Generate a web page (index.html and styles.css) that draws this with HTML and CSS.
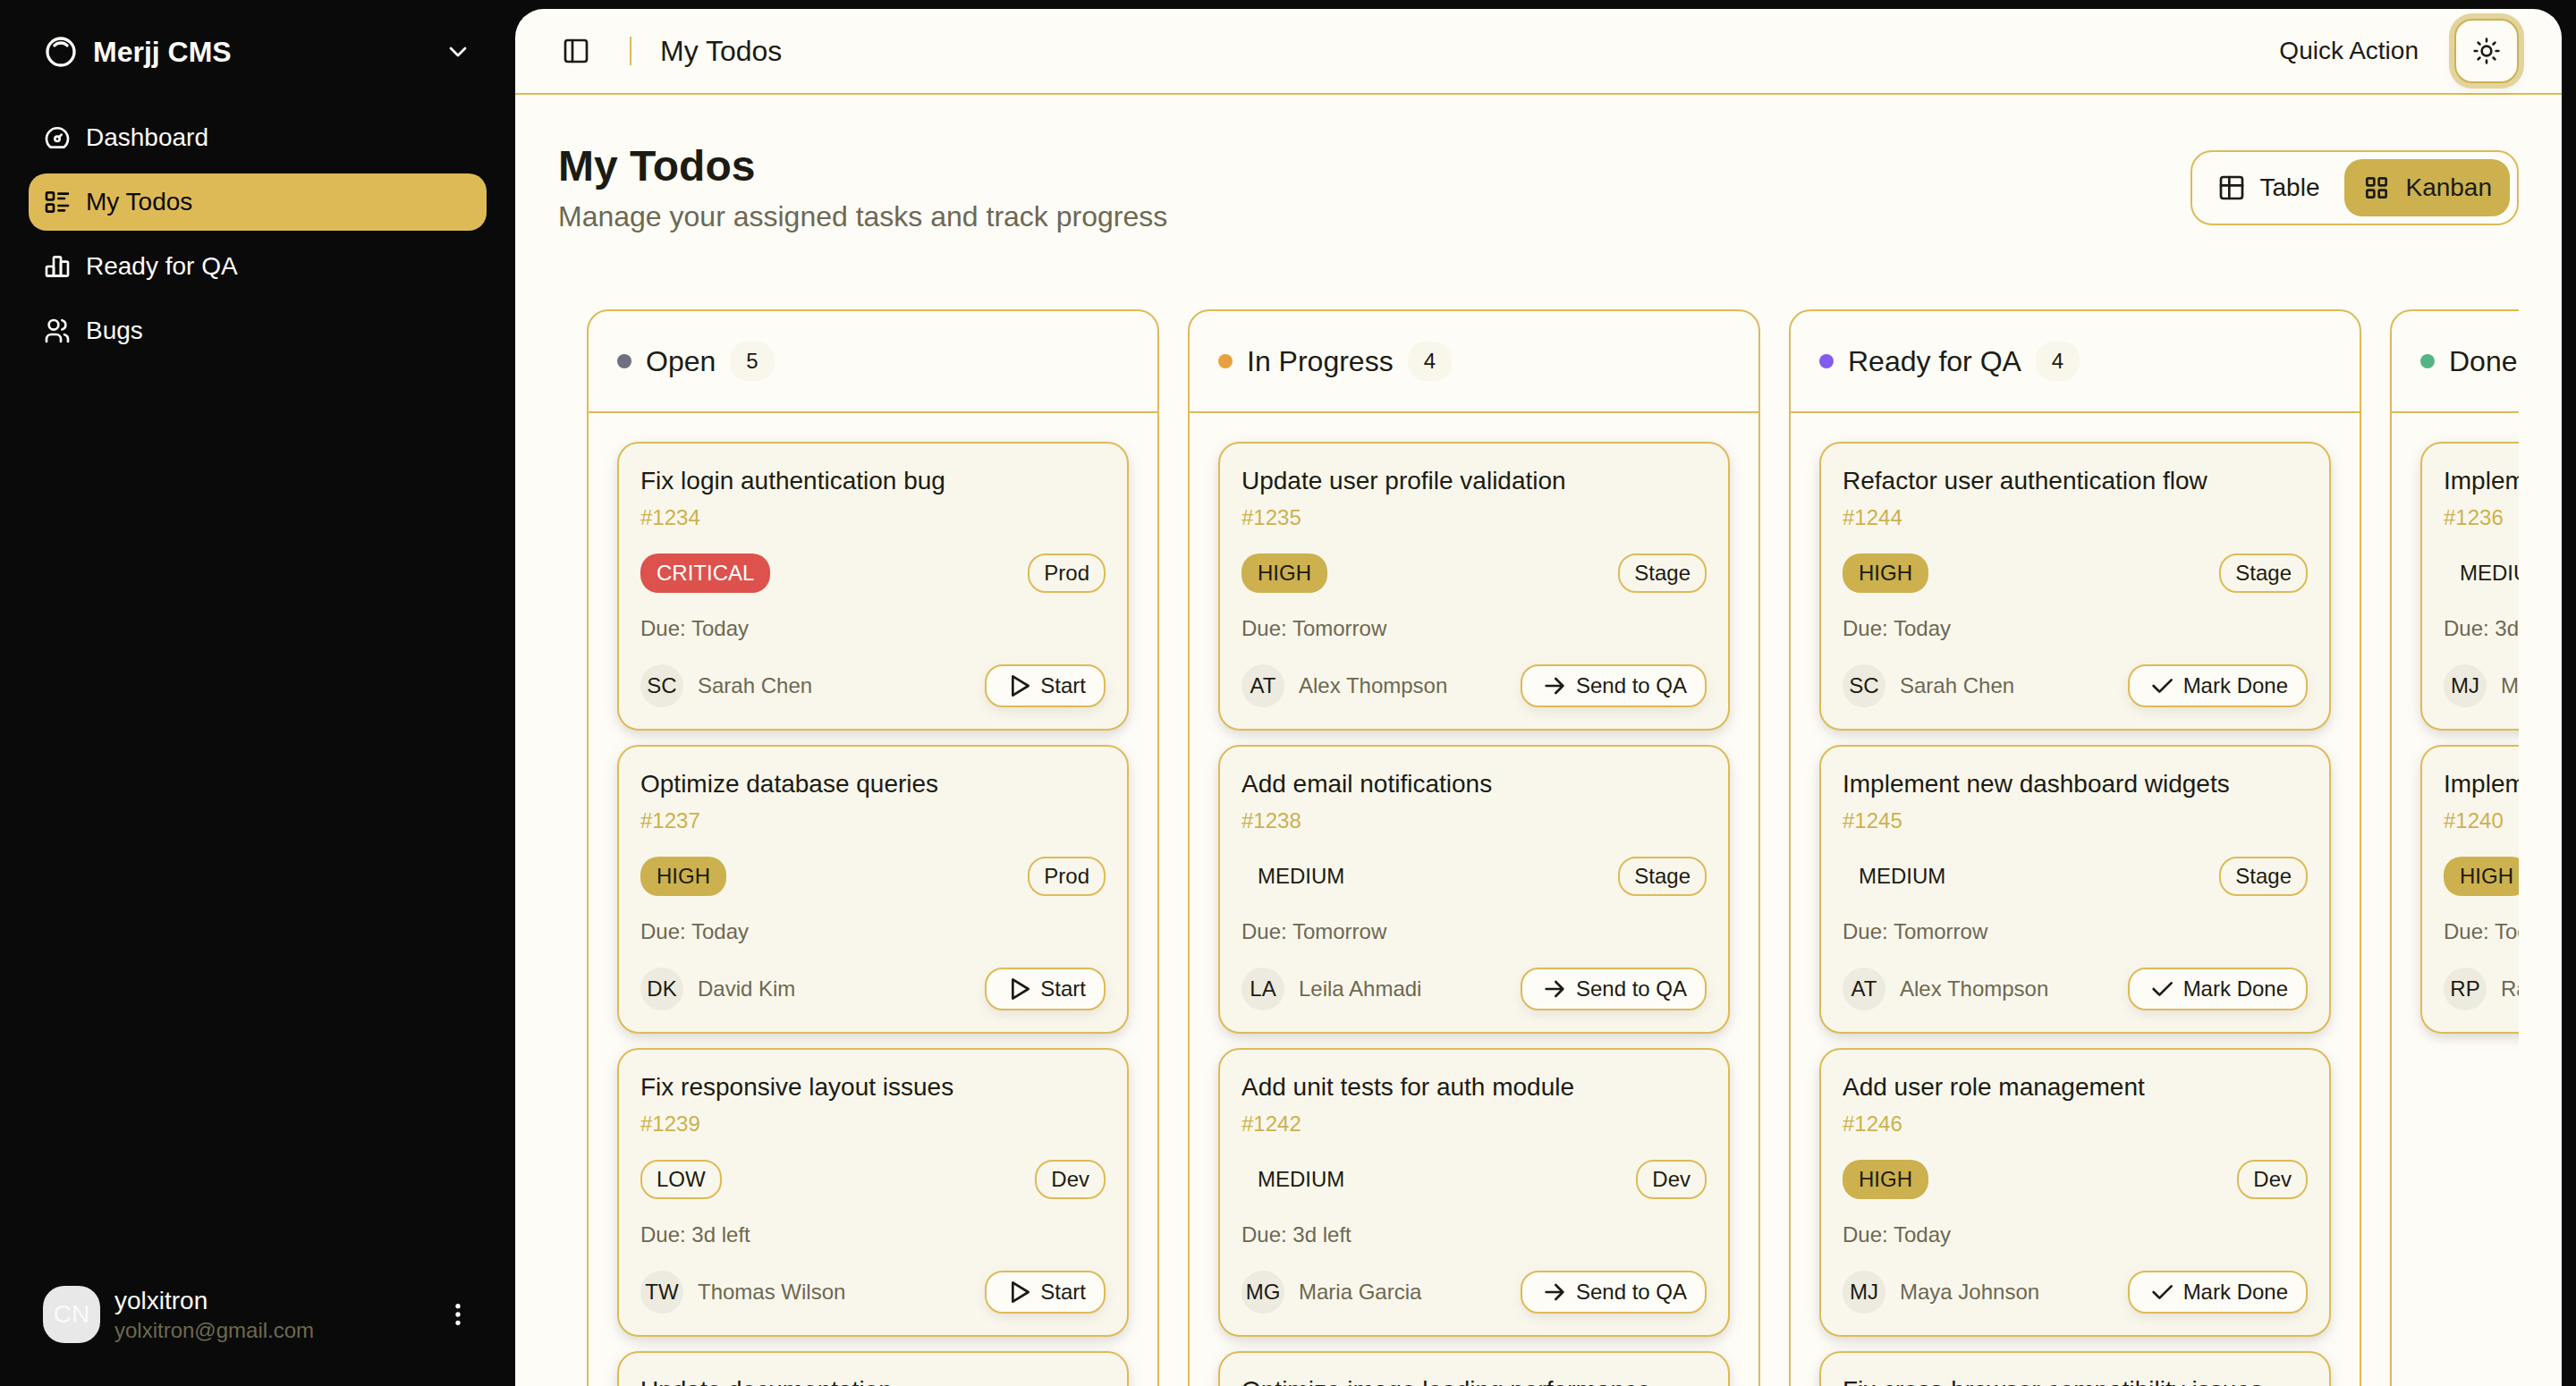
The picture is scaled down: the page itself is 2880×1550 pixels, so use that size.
FILE: index.html
```html
<!DOCTYPE html>
<html lang="en">
<head>
<meta charset="utf-8">
<title>My Todos - Merjj CMS</title>
<link rel="stylesheet" href="styles.css">
</head>
<body>
<svg class="sprite" aria-hidden="true">
  <symbol id="i-logo" viewBox="0 0 24 24"><path d="M5.636 5.636a9 9 0 1 0 12.728 12.728a9 9 0 0 0 -12.728 -12.728z"/><path d="M16.243 7.757a6 6 0 0 0 -8.486 0"/></symbol>
  <symbol id="i-chevron" viewBox="0 0 24 24"><path d="m6 9 6 6 6-6"/></symbol>
  <symbol id="i-dashboard" viewBox="0 0 24 24"><circle cx="12" cy="13" r="2"/><path d="M13.45 11.55l2.05 -2.05"/><path d="M6.4 20a9 9 0 1 1 11.2 0z"/></symbol>
  <symbol id="i-list" viewBox="0 0 24 24"><path d="M13 5h8M13 9h5M13 15h8M13 19h5"/><rect x="3" y="4" width="6" height="6" rx="1"/><rect x="3" y="14" width="6" height="6" rx="1"/></symbol>
  <symbol id="i-chart" viewBox="0 0 24 24"><path d="M3 13a1 1 0 0 1 1 -1h4a1 1 0 0 1 1 1v6a1 1 0 0 1 -1 1h-4a1 1 0 0 1 -1 -1z"/><path d="M15 9a1 1 0 0 1 1 -1h4a1 1 0 0 1 1 1v10a1 1 0 0 1 -1 1h-4a1 1 0 0 1 -1 -1z"/><path d="M9 5a1 1 0 0 1 1 -1h4a1 1 0 0 1 1 1v14a1 1 0 0 1 -1 1h-4a1 1 0 0 1 -1 -1z"/><path d="M4 20h14"/></symbol>
  <symbol id="i-users" viewBox="0 0 24 24"><circle cx="9" cy="7" r="4"/><path d="M3 21v-2a4 4 0 0 1 4 -4h4a4 4 0 0 1 4 4v2"/><path d="M16 3.13a4 4 0 0 1 0 7.75"/><path d="M21 21v-2a4 4 0 0 0 -3 -3.85"/></symbol>
  <symbol id="i-dots" viewBox="0 0 24 24"><circle cx="12" cy="12" r="1"/><circle cx="12" cy="19" r="1"/><circle cx="12" cy="5" r="1"/></symbol>
  <symbol id="i-panel" viewBox="0 0 24 24"><rect x="3" y="3" width="18" height="18" rx="2"/><path d="M9 3v18"/></symbol>
  <symbol id="i-sun" viewBox="0 0 24 24"><circle cx="12" cy="12" r="4"/><path d="M12 2v2M12 20v2M4.93 4.93l1.41 1.41M17.66 17.66l1.41 1.41M2 12h2M20 12h2M6.34 17.66l-1.41 1.41M19.07 4.93l-1.41 1.41"/></symbol>
  <symbol id="i-table" viewBox="0 0 24 24"><path d="M3 5a2 2 0 0 1 2 -2h14a2 2 0 0 1 2 2v14a2 2 0 0 1 -2 2h-14a2 2 0 0 1 -2 -2v-14z"/><path d="M3 10h18"/><path d="M10 3v18"/></symbol>
  <symbol id="i-grid" viewBox="0 0 24 24"><rect x="4" y="4" width="6" height="6" rx="1"/><rect x="14" y="4" width="6" height="6" rx="1"/><rect x="4" y="14" width="6" height="6" rx="1"/><rect x="14" y="14" width="6" height="6" rx="1"/></symbol>
  <symbol id="i-play" viewBox="0 0 24 24"><path d="M7 4v16l13 -8z"/></symbol>
  <symbol id="i-arrow" viewBox="0 0 24 24"><path d="M5 12h14M13 18l6 -6M13 6l6 6"/></symbol>
  <symbol id="i-check" viewBox="0 0 24 24"><path d="M5 12l5 5l10 -10"/></symbol>
</svg>

<div class="app">
  <aside class="sidebar">
    <button class="brand" type="button">
      <svg class="icon icon-lg"><use href="#i-logo"/></svg>
      <span class="brand-name">Merjj CMS</span>
      <svg class="icon"><use href="#i-chevron"/></svg>
    </button>
    <nav class="nav" aria-label="Main">
      <a class="nav-item" href="#dashboard"><svg class="icon"><use href="#i-dashboard"/></svg>Dashboard</a>
      <a class="nav-item active" href="#todos" aria-current="page"><svg class="icon"><use href="#i-list"/></svg>My Todos</a>
      <a class="nav-item" href="#qa"><svg class="icon"><use href="#i-chart"/></svg>Ready for QA</a>
      <a class="nav-item" href="#bugs"><svg class="icon"><use href="#i-users"/></svg>Bugs</a>
    </nav>
    <button class="user" type="button">
      <span class="user-avatar">CN</span>
      <span class="user-text">
        <span class="user-name">yolxitron</span>
        <span class="user-mail">yolxitron@gmail.com</span>
      </span>
      <svg class="icon"><use href="#i-dots"/></svg>
    </button>
  </aside>

  <main class="panel">
    <header class="topbar">
      <button class="trigger" type="button" aria-label="Toggle sidebar"><svg class="icon"><use href="#i-panel"/></svg></button>
      <span class="divider"></span>
      <span class="crumb">My Todos</span>
      <button class="quick" type="button">Quick Action</button>
      <button class="theme" type="button" aria-label="Toggle theme"><svg class="icon"><use href="#i-sun"/></svg></button>
    </header>

    <section class="content">
      <div class="heading">
        <div>
          <h1>My Todos</h1>
          <p class="subtitle">Manage your assigned tasks and track progress</p>
        </div>
        <div class="views">
          <button class="view" type="button"><svg class="icon"><use href="#i-table"/></svg>Table</button>
          <button class="view active" type="button" aria-pressed="true"><svg class="icon"><use href="#i-grid"/></svg>Kanban</button>
        </div>
      </div>
      <div class="board" id="board"></div>
    </section>
  </main>
</div>
<script src="board.js"></script>
</body>
</html>
```
FILE: styles.css
```css
:root {
  --ink: #1c1b12;
  --paper: #fdfcf7;
  --card: #f9f7ec;
  --line: #deba57;
  --gold: #ccb14e;
  --muted: #6d6852;
  --night: #0a0a0a;
}

* { box-sizing: border-box; margin: 0; }

body {
  background: var(--night);
  color: var(--ink);
  font: 28px/40px "Liberation Sans", Arial, sans-serif;
}

button {
  border: 0;
  padding: 0;
  background: none;
  color: inherit;
  font: inherit;
  cursor: pointer;
}

.sprite { display: none; }

.icon {
  flex: none;
  width: 32px;
  height: 32px;
  fill: none;
  stroke: currentColor;
  stroke-width: 2;
  stroke-linecap: round;
  stroke-linejoin: round;
}
.icon-lg { width: 40px; height: 40px; }

.app {
  display: flex;
  height: 100vh;
  overflow: hidden;
}

/* Sidebar */
.sidebar {
  flex: none;
  display: flex;
  flex-direction: column;
  width: 576px;
  padding: 26px 32px 32px;
  color: #fdfcf7;
}
.brand {
  display: flex;
  align-items: center;
  gap: 16px;
  height: 64px;
  padding: 0 16px;
  text-align: left;
}
.brand-name { flex: 1; font-size: 32px; font-weight: 700; }
.nav {
  flex: 1;
  display: flex;
  flex-direction: column;
  gap: 8px;
  padding-top: 32px;
}
.nav-item {
  display: flex;
  align-items: center;
  gap: 16px;
  height: 64px;
  padding: 0 16px;
  border-radius: 20px;
  color: inherit;
  text-decoration: none;
}
.nav-item.active { background: var(--line); color: var(--night); }
.user {
  display: flex;
  align-items: center;
  gap: 16px;
  height: 96px;
  padding: 0 16px;
  text-align: left;
}
.user-avatar {
  display: grid;
  place-items: center;
  width: 64px;
  height: 64px;
  border-radius: 24px;
  background: #e8e8e8;
  color: #fafafa;
}
.user-text { flex: 1; display: flex; flex-direction: column; }
.user-name { line-height: 35px; }
.user-mail { color: var(--muted); font-size: 24px; line-height: 32px; }

/* Main panel */
.panel {
  flex: 1;
  min-width: 0;
  display: flex;
  flex-direction: column;
  margin: 10px 16px 0 0;
  border-radius: 32px 32px 0 0;
  background: var(--paper);
}
.topbar {
  flex: none;
  display: flex;
  align-items: center;
  height: 96px;
  padding: 0 48px 0 40px;
  border-bottom: 2px solid var(--line);
}
.trigger { display: grid; place-items: center; width: 56px; height: 56px; }
.divider { width: 2px; height: 32px; margin: 0 32px; background: var(--line); }
.crumb { flex: 1; font-size: 32px; }
.quick { padding: 0 24px; margin-right: 16px; }
.theme {
  display: grid;
  place-items: center;
  width: 72px;
  height: 72px;
  border: 2px solid var(--gold);
  border-radius: 20px;
  background: var(--paper);
  box-shadow: 0 0 0 6px #e3d49e, 0 8px 16px rgba(28, 27, 18, 0.06);
}

.content {
  display: flex;
  flex-direction: column;
  gap: 64px;
  padding: 48px 48px 0;
}
.heading { display: flex; align-items: center; justify-content: space-between; }
h1 { font-size: 48px; line-height: 64px; }
.subtitle { color: var(--muted); font-size: 32px; line-height: 48px; }
.views {
  display: flex;
  gap: 8px;
  padding: 8px;
  border: 2px solid var(--line);
  border-radius: 24px;
}
.view {
  display: flex;
  align-items: center;
  gap: 16px;
  height: 64px;
  padding: 0 20px;
  border-radius: 20px;
}
.view.active { background: var(--gold); }

/* Kanban board: every column is as tall as the longest one */
.board {
  display: flex;
  gap: 32px;
  padding: 16px 32px 32px;
  overflow: hidden;
}
.column {
  flex: none;
  width: 640px;
  border: 2px solid var(--line);
  border-radius: 24px;
}
.column-head {
  display: flex;
  align-items: center;
  gap: 16px;
  height: 114px;
  padding: 0 32px;
  border-bottom: 2px solid var(--line);
}
.column-head h2 { font-size: 32px; font-weight: 400; }
.dot { width: 16px; height: 16px; border-radius: 50%; }
.dot-open { background: #6c7080; }
.dot-progress { background: #e8a13c; }
.dot-qa { background: #835ced; }
.dot-done { background: #54b584; }

.tag {
  height: 44px;
  padding: 0 16px;
  border: 2px solid transparent;
  border-radius: 20px;
  font-size: 24px;
  line-height: 40px;
}
.tag-count { background: var(--card); }
.tag-critical { background: #dd524c; color: #fff; }
.tag-high { background: var(--gold); }
.tag-low, .tag-env { border-color: var(--line); }

.cards {
  display: flex;
  flex-direction: column;
  gap: 16px;
  padding: 32px;
}
.card {
  padding: 24px;
  border: 2px solid var(--line);
  border-radius: 24px;
  background: var(--card);
  box-shadow: 0 4px 20px rgba(28, 27, 18, 0.07), 0 6px 12px -2px rgba(28, 27, 18, 0.1);
}
.card h3 { font-size: 28px; font-weight: 400; line-height: 35px; }
.ticket { margin-top: 8px; color: var(--gold); font-size: 24px; line-height: 32px; }
.row {
  display: flex;
  align-items: center;
  justify-content: space-between;
  margin-top: 24px;
}
.due { margin-top: 24px; color: var(--muted); font-size: 24px; line-height: 32px; }
.assignee {
  display: flex;
  align-items: center;
  gap: 16px;
  color: var(--muted);
  font-size: 24px;
}
.avatar {
  display: grid;
  place-items: center;
  width: 48px;
  height: 48px;
  border-radius: 50%;
  background: #edeae0;
  color: var(--ink);
}
.action {
  display: flex;
  align-items: center;
  gap: 8px;
  height: 48px;
  padding: 0 20px;
  border: 2px solid var(--line);
  border-radius: 20px;
  background: var(--paper);
  font-size: 24px;
  box-shadow: 0 4px 20px rgba(28, 27, 18, 0.04), 0 6px 12px -2px rgba(28, 27, 18, 0.05);
}
```
FILE: board.js
```js
const columns = [
  { name: "Open", dot: "open", icon: "play", action: "Start", cards: [
    ["Fix login authentication bug", 1234, "CRITICAL", "Prod", "Today", "Sarah Chen"],
    ["Optimize database queries", 1237, "HIGH", "Prod", "Today", "David Kim"],
    ["Fix responsive layout issues", 1239, "LOW", "Dev", "3d left", "Thomas Wilson"],
    ["Update documentation", 1241, "LOW", "Dev", "3d left", "Nina Patel"],
    ["Review error logging", 1243, "MEDIUM", "Stage", "Tomorrow", "Sarah Chen"]
  ] },
  { name: "In Progress", dot: "progress", icon: "arrow", action: "Send to QA", cards: [
    ["Update user profile validation", 1235, "HIGH", "Stage", "Tomorrow", "Alex Thompson"],
    ["Add email notifications", 1238, "MEDIUM", "Stage", "Tomorrow", "Leila Ahmadi"],
    ["Add unit tests for auth module", 1242, "MEDIUM", "Dev", "3d left", "Maria Garcia"],
    ["Optimize image loading performance", 1248, "LOW", "Dev", "3d left", "David Kim"]
  ] },
  { name: "Ready for QA", dot: "qa", icon: "check", action: "Mark Done", cards: [
    ["Refactor user authentication flow", 1244, "HIGH", "Stage", "Today", "Sarah Chen"],
    ["Implement new dashboard widgets", 1245, "MEDIUM", "Stage", "Tomorrow", "Alex Thompson"],
    ["Add user role management", 1246, "HIGH", "Dev", "Today", "Maya Johnson"],
    ["Fix cross-browser compatibility issues", 1247, "MEDIUM", "Dev", "3d left", "Thomas Wilson"]
  ] },
  { name: "Done", dot: "done", cards: [
    ["Implement search filters", 1236, "MEDIUM", "Stage", "3d left", "Maya Johnson"],
    ["Implement file upload", 1240, "HIGH", "Prod", "Today", "Raj Patel"]
  ] }
];

const initials = name => name.split(" ").map(part => part[0]).join("");

const actionButton = col => col.action
  ? `<button class="action" type="button"><svg class="icon"><use href="#i-${col.icon}"/></svg>${col.action}</button>`
  : "";

const card = (col, [title, id, priority, env, due, who]) => `
  <article class="card">
    <h3>${title}</h3>
    <p class="ticket">#${id}</p>
    <div class="row">
      <span class="tag tag-${priority.toLowerCase()}">${priority}</span>
      <span class="tag tag-env">${env}</span>
    </div>
    <p class="due">Due: ${due}</p>
    <div class="row">
      <div class="assignee"><span class="avatar">${initials(who)}</span>${who}</div>
      ${actionButton(col)}
    </div>
  </article>`;

document.getElementById("board").innerHTML = columns.map(col => `
  <section class="column">
    <header class="column-head">
      <span class="dot dot-${col.dot}"></span>
      <h2>${col.name}</h2>
      <span class="tag tag-count">${col.cards.length}</span>
    </header>
    <div class="cards">${col.cards.map(item => card(col, item)).join("")}</div>
  </section>`).join("");
```
